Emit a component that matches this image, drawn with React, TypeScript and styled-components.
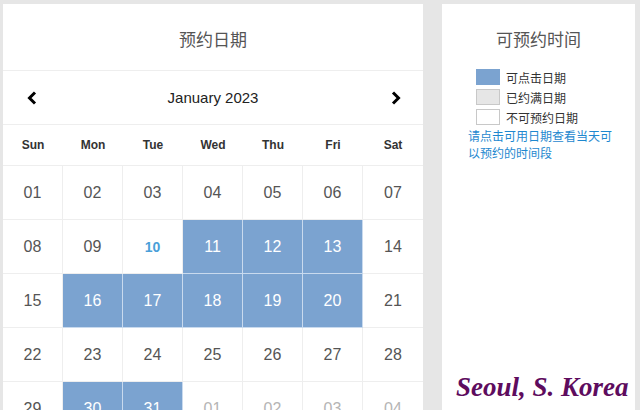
import styled, { createGlobalStyle } from 'styled-components';

type DayType = {
  label: string;
  kind: 'normal' | 'today' | 'open' | 'muted';
};

const GlobalStyle = createGlobalStyle`
  html, body {
    margin: 0;
    padding: 0;
    background: #e6e6e6;
    overflow: hidden;
  }
  body {
    font-family: 'Liberation Sans', 'Noto Sans CJK SC', Arial, sans-serif;
  }
`;

const StyledPage = styled.div`
  display: flex;
  align-items: flex-start;
  gap: 19px;
  padding: 4px 0 0 3px;
  width: 640px;
  height: 410px;
  box-sizing: border-box;
  position: relative;
  overflow: hidden;
`;

const StyledCalendar = styled.div`
  width: 420px;
  background: #fff;
  flex-shrink: 0;
`;

const StyledTitle = styled.div`
  height: 67px;
  display: flex;
  align-items: center;
  justify-content: center;
  font-family: 'Noto Sans CJK SC', sans-serif;
  font-size: 17px;
  color: #555;
  border-bottom: 1px solid #eee;
  box-sizing: border-box;
  padding-top: 2px;
`;

const StyledMonthBar = styled.div`
  height: 54px;
  display: flex;
  align-items: center;
  justify-content: space-between;
  padding: 0 20px 0 22px;
  border-bottom: 1px solid #eee;
  box-sizing: border-box;
`;

const StyledMonth = styled.span`
  font-size: 15px;
  color: #222;
  margin-left: -2px;
`;

const StyledArrow = styled.svg`
  width: 14px;
  height: 14px;
  display: block;
`;

const StyledWeekRow = styled.div`
  display: grid;
  grid-template-columns: repeat(7, 60px);
  height: 41px;
  border-bottom: 1px solid #eee;
  box-sizing: border-box;
`;

const StyledWeekday = styled.div`
  display: flex;
  align-items: center;
  justify-content: center;
  font-size: 12px;
  font-weight: bold;
  color: #333;
`;

const StyledDays = styled.div`
  display: grid;
  grid-template-columns: repeat(7, 60px);
  grid-auto-rows: 54px;
`;

const StyledDay = styled.div<{ kind: DayType['kind']; last: boolean }>`
  display: flex;
  align-items: center;
  justify-content: center;
  box-sizing: border-box;
  border-right: ${({ last, kind }) =>
    last ? 'none' : kind === 'open' ? '1px solid #c9daee' : '1px solid #eee'};
  border-bottom: ${({ kind }) =>
    kind === 'open' ? '1px solid #c9daee' : '1px solid #eee'};
  background: ${({ kind }) => (kind === 'open' ? '#7ba3d0' : '#fff')};
  font-size: ${({ kind }) => (kind === 'today' ? '14px' : '16px')};
  font-weight: ${({ kind }) => (kind === 'today' ? 'bold' : 'normal')};
  color: ${({ kind }) => {
    switch (kind) {
      case 'open':
        return '#fff';
      case 'today':
        return '#4a9fd9';
      case 'muted':
        return '#b5b5b5';
      default:
        return '#555';
    }
  }};
`;

const StyledSide = styled.div`
  width: 193px;
  height: 406px;
  background: #fff;
  padding: 0 14px 0 26px;
  box-sizing: border-box;
  flex-shrink: 0;
`;

const StyledSideTitle = styled.div`
  height: 65px;
  display: flex;
  align-items: center;
  justify-content: center;
  margin-left: -12px;
  font-family: 'Noto Sans CJK SC', sans-serif;
  font-size: 17px;
  color: #555;
  padding-top: 4px;
  box-sizing: border-box;
`;

const StyledLegend = styled.div`
  display: flex;
  flex-direction: column;
  gap: 4px;
  padding-left: 8px;
`;

const StyledLegendRow = styled.div`
  display: flex;
  align-items: center;
  gap: 6px;
  height: 16px;
  font-family: 'Noto Sans CJK SC', sans-serif;
  font-size: 12px;
  color: #333;
`;

const StyledSwatch = styled.span<{ fill: string }>`
  width: 24px;
  height: 16px;
  box-sizing: border-box;
  background: ${({ fill }) => fill};
  border: 1px solid ${({ fill }) => (fill === '#7ba3d0' ? '#7ba3d0' : '#c8c8c8')};
`;

const StyledHint = styled.p`
  margin: 2px 0 0;
  font-family: 'Noto Sans CJK SC', sans-serif;
  font-size: 12px;
  line-height: 17px;
  color: #1e88cf;
  width: 150px;
`;

const StyledStamp = styled.div`
  position: absolute;
  left: 456px;
  top: 372px;
  font-family: 'Liberation Serif', 'DejaVu Serif', serif;
  font-style: italic;
  font-weight: bold;
  font-size: 27px;
  color: #5e0c5e;
  white-space: nowrap;
`;

const weekdays = ['Sun', 'Mon', 'Tue', 'Wed', 'Thu', 'Fri', 'Sat'];
const openDays = [11, 12, 13, 16, 17, 18, 19, 20, 30, 31];

const days: DayType[] = [
  ...Array.from({ length: 31 }, (_, i) => {
    const n = i + 1;
    const kind: DayType['kind'] =
      n === 10 ? 'today' : openDays.includes(n) ? 'open' : 'normal';
    return { label: String(n).padStart(2, '0'), kind };
  }),
  ...[1, 2, 3, 4].map((n) => ({
    label: String(n).padStart(2, '0'),
    kind: 'muted' as const,
  })),
];

const legend = [
  { fill: '#7ba3d0', label: '可点击日期' },
  { fill: '#e6e6e6', label: '已约满日期' },
  { fill: '#fff', label: '不可预约日期' },
];

export default function App() {
  return (
    <>
      <GlobalStyle />
      <StyledPage>
        <StyledCalendar>
          <StyledTitle>预约日期</StyledTitle>
          <StyledMonthBar>
            <StyledArrow viewBox="0 0 14 14">
              <path
                d="M10 1.5 L4.5 7 L10 12.5"
                fill="none"
                stroke="#000"
                strokeWidth="3"
              />
            </StyledArrow>
            <StyledMonth>January 2023</StyledMonth>
            <StyledArrow viewBox="0 0 14 14">
              <path
                d="M4 1.5 L9.5 7 L4 12.5"
                fill="none"
                stroke="#000"
                strokeWidth="3"
              />
            </StyledArrow>
          </StyledMonthBar>
          <StyledWeekRow>
            {weekdays.map((d) => (
              <StyledWeekday key={d}>{d}</StyledWeekday>
            ))}
          </StyledWeekRow>
          <StyledDays>
            {days.map((d, index) => (
              <StyledDay key={index} kind={d.kind} last={index % 7 === 6}>
                {d.label}
              </StyledDay>
            ))}
          </StyledDays>
        </StyledCalendar>
        <StyledSide>
          <StyledSideTitle>可预约时间</StyledSideTitle>
          <StyledLegend>
            {legend.map((l) => (
              <StyledLegendRow key={l.label}>
                <StyledSwatch fill={l.fill} />
                {l.label}
              </StyledLegendRow>
            ))}
          </StyledLegend>
          <StyledHint>请点击可用日期查看当天可以预约的时间段</StyledHint>
        </StyledSide>
        <StyledStamp>Seoul, S. Korea</StyledStamp>
      </StyledPage>
    </>
  );
}
